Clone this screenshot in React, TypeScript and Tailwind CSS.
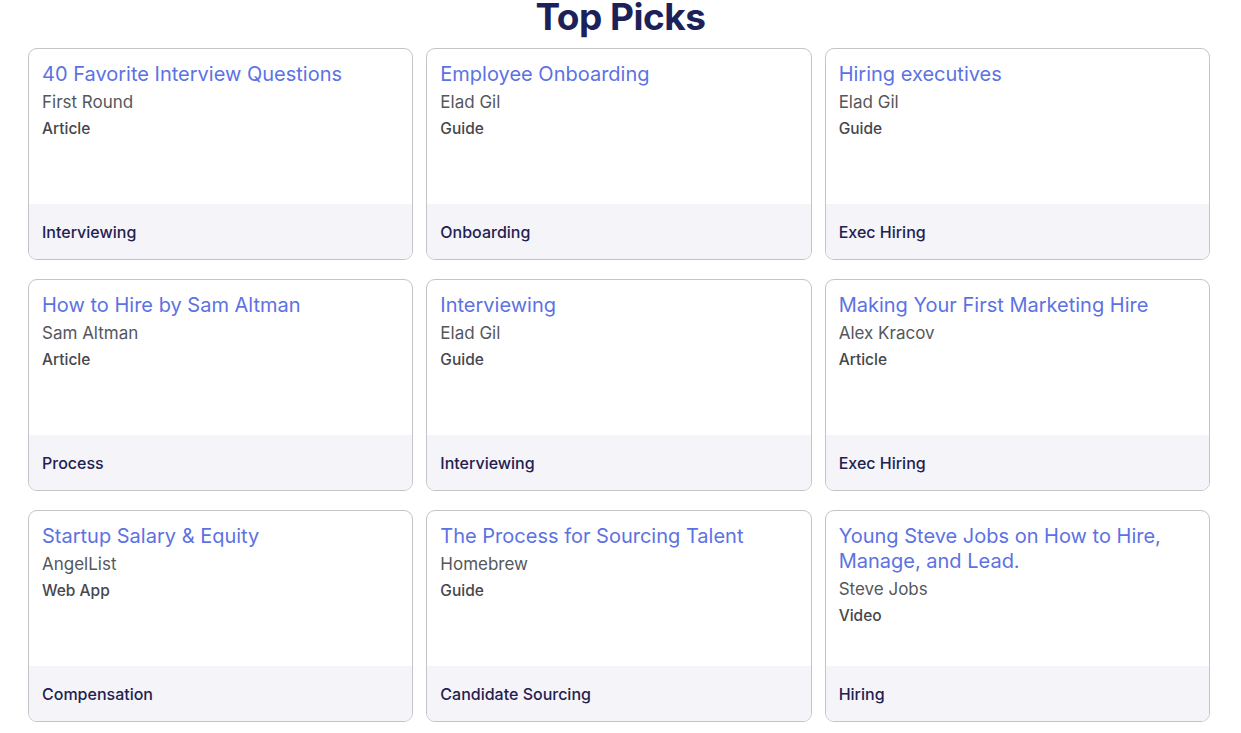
const picks = [
  { title: '40 Favorite Interview Questions', author: 'First Round', kind: 'Article', tag: 'Interviewing' },
  { title: 'Employee Onboarding', author: 'Elad Gil', kind: 'Guide', tag: 'Onboarding' },
  { title: 'Hiring executives', author: 'Elad Gil', kind: 'Guide', tag: 'Exec Hiring' },
  { title: 'How to Hire by Sam Altman', author: 'Sam Altman', kind: 'Article', tag: 'Process' },
  { title: 'Interviewing', author: 'Elad Gil', kind: 'Guide', tag: 'Interviewing' },
  { title: 'Making Your First Marketing Hire', author: 'Alex Kracov', kind: 'Article', tag: 'Exec Hiring' },
  { title: 'Startup Salary & Equity', author: 'AngelList', kind: 'Web App', tag: 'Compensation' },
  { title: 'The Process for Sourcing Talent', author: 'Homebrew', kind: 'Guide', tag: 'Candidate Sourcing' },
  { title: 'Young Steve Jobs on How to Hire, Manage, and Lead.', author: 'Steve Jobs', kind: 'Video', tag: 'Hiring' },
]

function PickCard({ title, author, kind, tag }: (typeof picks)[number]) {
  return (
    <a
      href="#"
      className="flex h-[212px] flex-col overflow-hidden rounded-[9px] border border-[#c4c4c8] bg-white"
    >
      <div className="flex-1 px-[13px] pt-[13px]">
        <h3 className="text-[20px] leading-[25px] text-[#5c72e3]">{title}</h3>
        <p className="mt-[3px] text-[17px] leading-[24px] text-[#55575c]">{author}</p>
        <p className="mt-[4px] text-[15.5px] font-medium leading-[22px] text-[#45474d]">{kind}</p>
      </div>
      <div className="flex h-[55px] items-center bg-[#f5f4f9] px-[13px] text-[16px] font-medium text-[#1f2150]">
        {tag}
      </div>
    </a>
  )
}

export default function App() {
  return (
    <div className="min-h-screen bg-white font-['Inter','Noto_Sans',sans-serif]">
      <h2 className="-mt-[6px] text-center text-[37px] font-bold leading-[46px] tracking-[-0.5px] text-[#1d2159]">
        Top Picks
      </h2>
      <div className="ml-[28px] mt-[8px] grid w-[1182px] grid-cols-3 gap-x-[13px] gap-y-[19px] pb-8">
        {picks.map((p) => (
          <PickCard key={p.title} {...p} />
        ))}
      </div>
    </div>
  )
}
